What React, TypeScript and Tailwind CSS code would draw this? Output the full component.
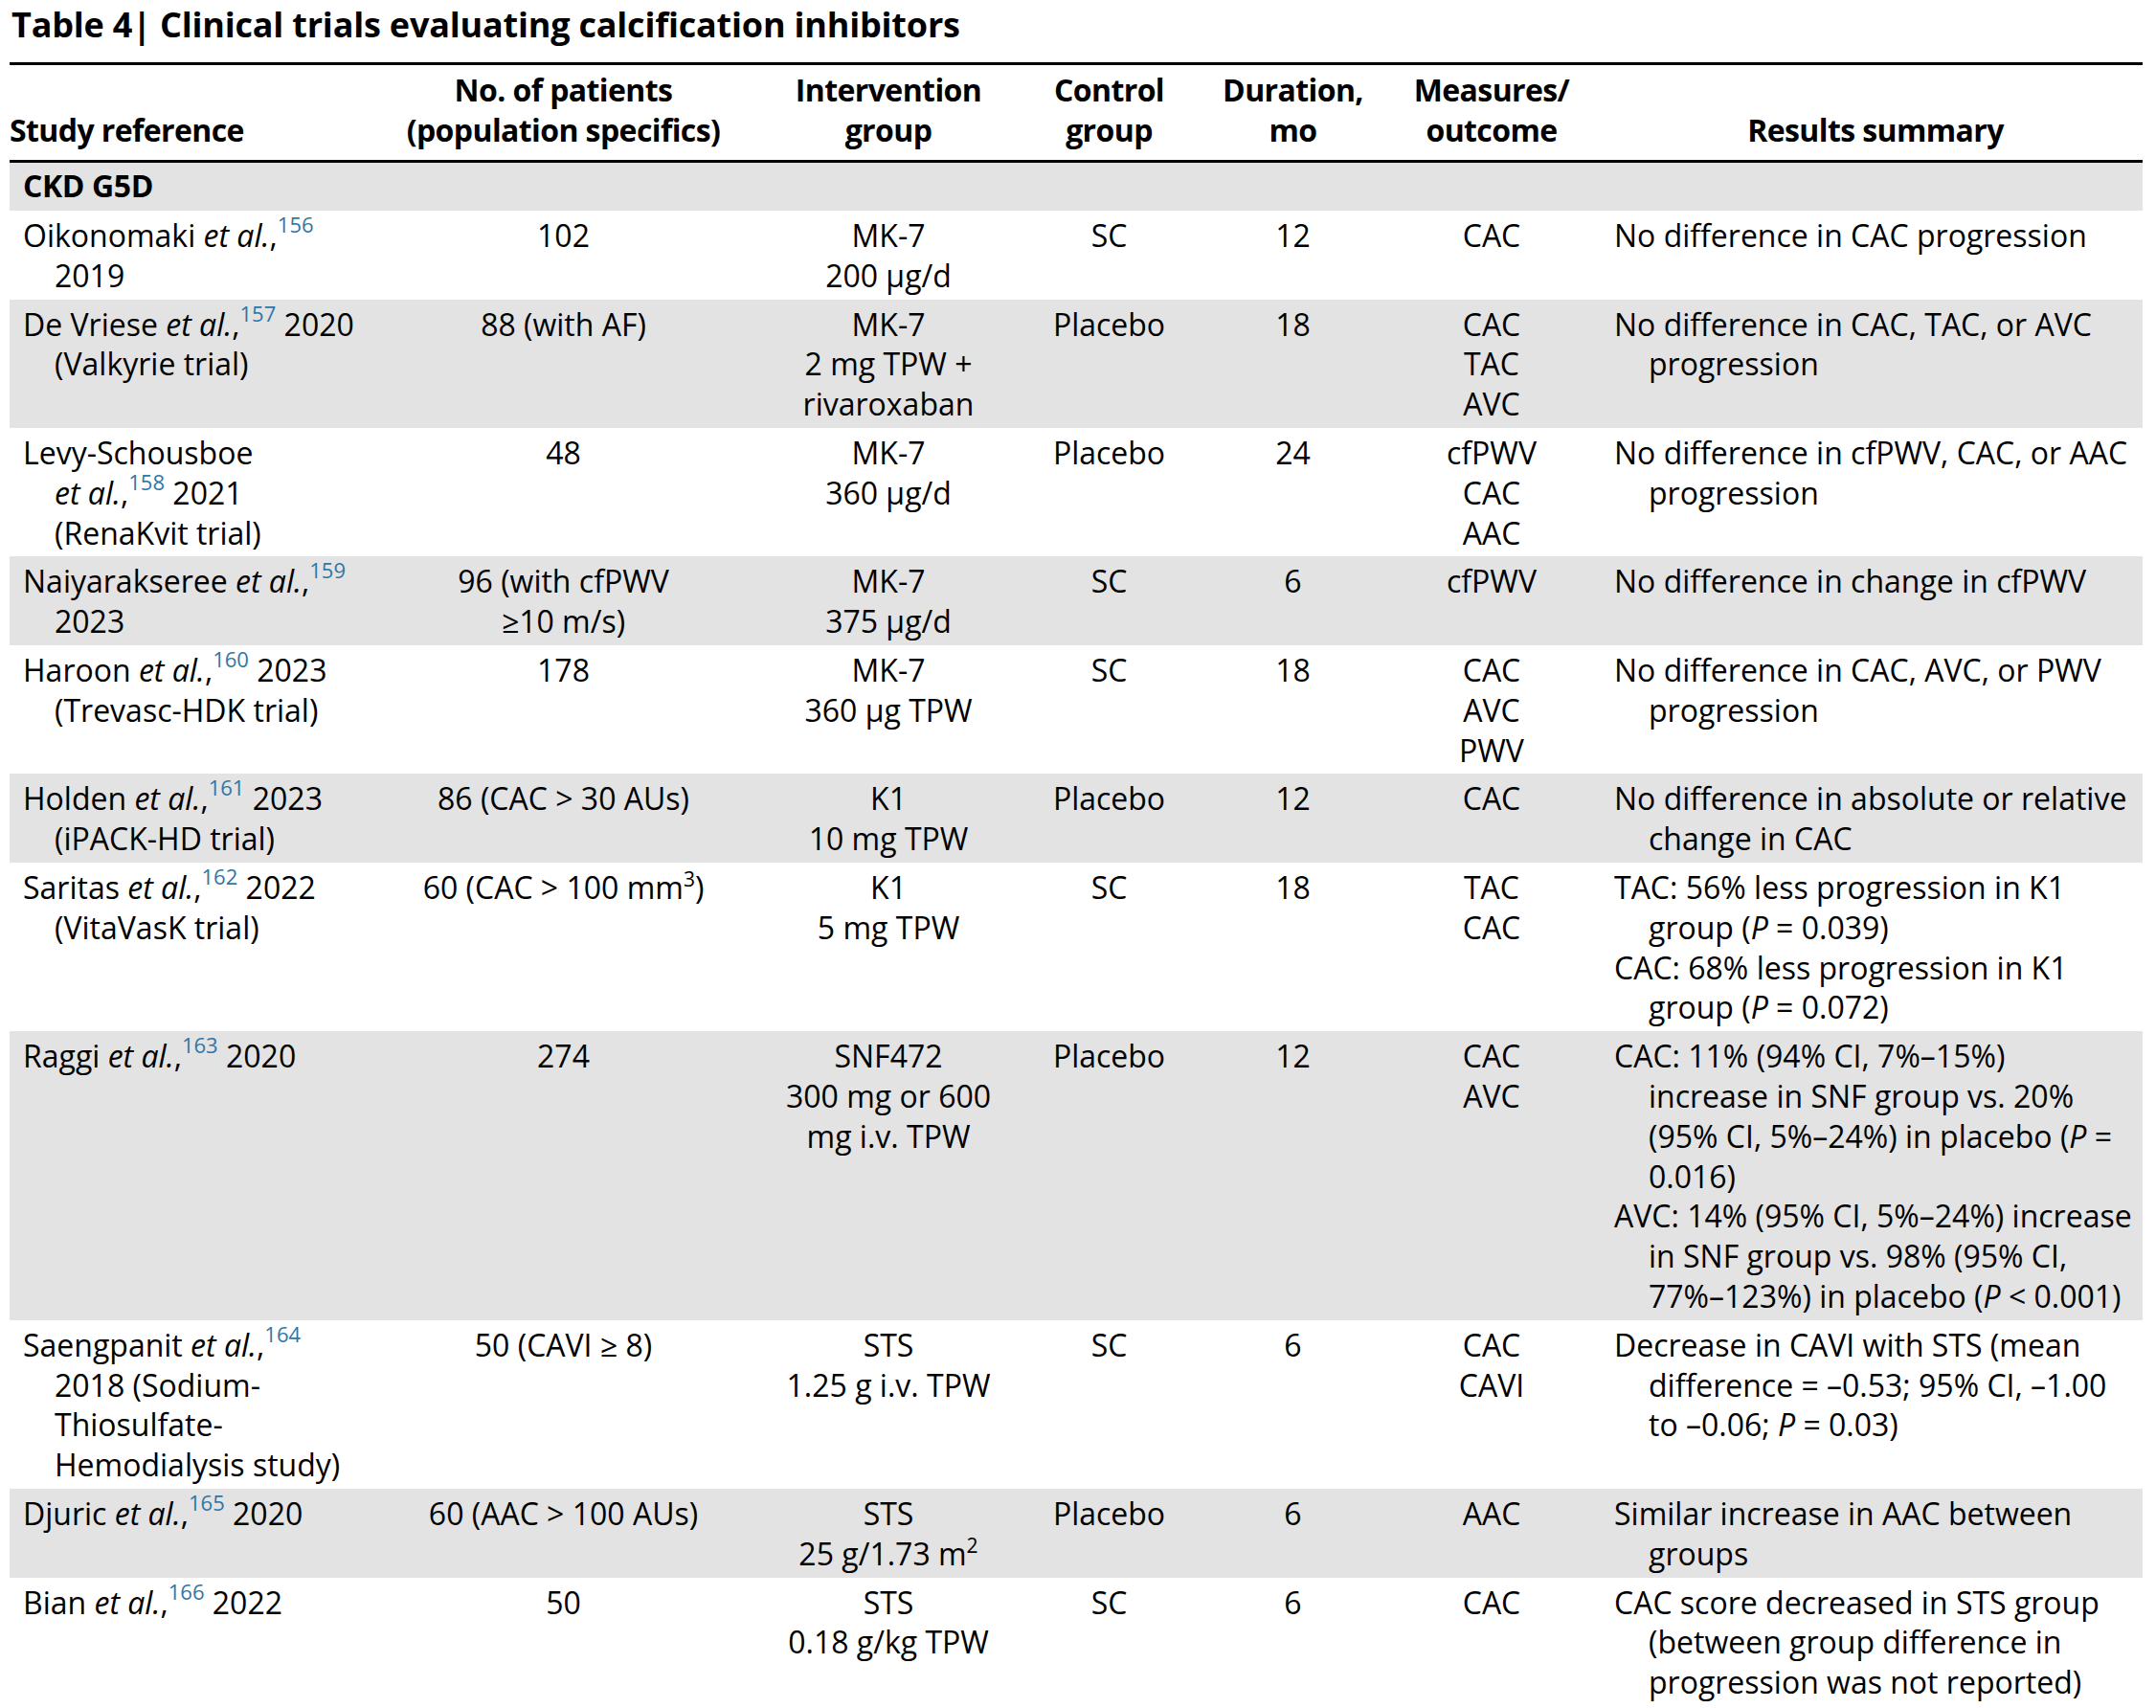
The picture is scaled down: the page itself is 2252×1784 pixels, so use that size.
import React from "react";

type N = React.ReactNode;

const It = ({ children }: { children: N }) => <i className="italic">{children}</i>;
const Sup = ({ n }: { n: string }) => (
  <span className="relative -top-[15px] text-[22px] leading-none text-[#2f77a6]">{n}</span>
);
const Pw = ({ n }: { n: string }) => (
  <span className="relative -top-[13px] text-[21px] leading-none">{n}</span>
);
const EtAl = ({ n }: { n: string }) => (
  <>
    <It>et al.</It>,<Sup n={n} />
  </>
);

type Row = {
  gray: boolean;
  c1: N[];
  c2: N[];
  c3: N[];
  c4: string;
  c5: string;
  c6: string[];
  c7: N[][];
};

const rows: Row[] = [
  {
    gray: false,
    c1: [<>Oikonomaki <EtAl n="156" /></>, "2019"],
    c2: ["102"],
    c3: ["MK-7", "200 µg/d"],
    c4: "SC",
    c5: "12",
    c6: ["CAC"],
    c7: [["No difference in CAC progression"]],
  },
  {
    gray: true,
    c1: [<>De Vriese <EtAl n="157" /> 2020</>, "(Valkyrie trial)"],
    c2: ["88 (with AF)"],
    c3: ["MK-7", "2 mg TPW +", "rivaroxaban"],
    c4: "Placebo",
    c5: "18",
    c6: ["CAC", "TAC", "AVC"],
    c7: [["No difference in CAC, TAC, or AVC", "progression"]],
  },
  {
    gray: false,
    c1: ["Levy-Schousboe", <><EtAl n="158" /> 2021</>, "(RenaKvit trial)"],
    c2: ["48"],
    c3: ["MK-7", "360 µg/d"],
    c4: "Placebo",
    c5: "24",
    c6: ["cfPWV", "CAC", "AAC"],
    c7: [["No difference in cfPWV, CAC, or AAC", "progression"]],
  },
  {
    gray: true,
    c1: [<>Naiyarakseree <EtAl n="159" /></>, "2023"],
    c2: ["96 (with cfPWV", "≥10 m/s)"],
    c3: ["MK-7", "375 µg/d"],
    c4: "SC",
    c5: "6",
    c6: ["cfPWV"],
    c7: [["No difference in change in cfPWV"]],
  },
  {
    gray: false,
    c1: [<>Haroon <EtAl n="160" /> 2023</>, "(Trevasc-HDK trial)"],
    c2: ["178"],
    c3: ["MK-7", "360 µg TPW"],
    c4: "SC",
    c5: "18",
    c6: ["CAC", "AVC", "PWV"],
    c7: [["No difference in CAC, AVC, or PWV", "progression"]],
  },
  {
    gray: true,
    c1: [<>Holden <EtAl n="161" /> 2023</>, "(iPACK-HD trial)"],
    c2: ["86 (CAC > 30 AUs)"],
    c3: ["K1", "10 mg TPW"],
    c4: "Placebo",
    c5: "12",
    c6: ["CAC"],
    c7: [["No difference in absolute or relative", "change in CAC"]],
  },
  {
    gray: false,
    c1: [<>Saritas <EtAl n="162" /> 2022</>, "(VitaVasK trial)"],
    c2: [<>60 (CAC &gt; 100 mm<Pw n="3" />)</>],
    c3: ["K1", "5 mg TPW"],
    c4: "SC",
    c5: "18",
    c6: ["TAC", "CAC"],
    c7: [
      ["TAC: 56% less progression in K1", <>group (<It>P</It> = 0.039)</>],
      ["CAC: 68% less progression in K1", <>group (<It>P</It> = 0.072)</>],
    ],
  },
  {
    gray: true,
    c1: [<>Raggi <EtAl n="163" /> 2020</>],
    c2: ["274"],
    c3: ["SNF472", "300 mg or 600", "mg i.v. TPW"],
    c4: "Placebo",
    c5: "12",
    c6: ["CAC", "AVC"],
    c7: [
      [
        "CAC: 11% (94% CI, 7%–15%)",
        "increase in SNF group vs. 20%",
        <>(95% CI, 5%–24%) in placebo (<It>P</It> =</>,
        "0.016)",
      ],
      [
        "AVC: 14% (95% CI, 5%–24%) increase",
        "in SNF group vs. 98% (95% CI,",
        <>77%–123%) in placebo (<It>P</It> &lt; 0.001)</>,
      ],
    ],
  },
  {
    gray: false,
    c1: [<>Saengpanit <EtAl n="164" /></>, "2018 (Sodium-", "Thiosulfate-", "Hemodialysis study)"],
    c2: ["50 (CAVI ≥ 8)"],
    c3: ["STS", "1.25 g i.v. TPW"],
    c4: "SC",
    c5: "6",
    c6: ["CAC", "CAVI"],
    c7: [
      [
        "Decrease in CAVI with STS (mean",
        "difference = –0.53; 95% CI, –1.00",
        <>to –0.06; <It>P</It> = 0.03)</>,
      ],
    ],
  },
  {
    gray: true,
    c1: [<>Djuric <EtAl n="165" /> 2020</>],
    c2: ["60 (AAC > 100 AUs)"],
    c3: ["STS", <>25 g/1.73 m<Pw n="2" /></>],
    c4: "Placebo",
    c5: "6",
    c6: ["AAC"],
    c7: [["Similar increase in AAC between", "groups"]],
  },
  {
    gray: false,
    c1: [<>Bian <EtAl n="166" /> 2022</>],
    c2: ["50"],
    c3: ["STS", "0.18 g/kg TPW"],
    c4: "SC",
    c5: "6",
    c6: ["CAC"],
    c7: [
      [
        "CAC score decreased in STS group",
        "(between group difference in",
        "progression was not reported)",
      ],
    ],
  },
];

const GRID = "grid grid-cols-[381px_395px_284px_177px_207px_208px_576px]";

function Centered({ lines }: { lines: N[] }) {
  return (
    <div className="text-center">
      {lines.map((l, i) => (
        <div key={i} className="whitespace-nowrap">
          {l}
        </div>
      ))}
    </div>
  );
}

function BodyRow({ r }: { r: Row }) {
  return (
    <div className={`${GRID} pt-[5px] pb-[4px] ${r.gray ? "bg-[#e3e3e3]" : "bg-white"}`}>
      <div className="pl-[14px]">
        {r.c1.map((l, i) => (
          <div key={i} className={`whitespace-nowrap ${i > 0 ? "pl-[33px]" : ""}`}>
            {l}
          </div>
        ))}
      </div>
      <Centered lines={r.c2} />
      <Centered lines={r.c3} />
      <Centered lines={[r.c4]} />
      <Centered lines={[r.c5]} />
      <Centered lines={r.c6} />
      <div className="pl-[24px]">
        {r.c7.map((p, pi) => (
          <div key={pi}>
            {p.map((l, i) => (
              <div key={i} className={`whitespace-nowrap ${i > 0 ? "pl-[36px]" : ""}`}>
                {l}
              </div>
            ))}
          </div>
        ))}
      </div>
    </div>
  );
}

export default function App() {
  return (
    <div className="w-[2252px] min-h-[1784px] bg-white text-black font-['Open_Sans',sans-serif] text-[32px] leading-[41.8px]">
      <div className="h-[65px] pl-[12px] pt-[2px] text-[36px] font-bold leading-[48px] tracking-[-0.2px] whitespace-nowrap">
        Table 4| Clinical trials evaluating calcification inhibitors
      </div>
      <div className="ml-[10px] w-[2228px]">
        <div className="h-[3px] bg-black" />
        <div className={`${GRID} h-[99px] items-end pb-[10px] font-bold tracking-[-0.6px]`}>
          <div className="whitespace-nowrap">Study reference</div>
          <Centered lines={["No. of patients", "(population specifics)"]} />
          <Centered lines={["Intervention", "group"]} />
          <Centered lines={["Control", "group"]} />
          <Centered lines={["Duration,", "mo"]} />
          <Centered lines={["Measures/", "outcome"]} />
          <div className="pl-[18px] text-center whitespace-nowrap">Results summary</div>
        </div>
        <div className="h-[3px] bg-black" />
        <div className="h-[50px] bg-[#e3e3e3] pl-[14px] pt-[3px] font-bold tracking-[-0.4px]">CKD G5D</div>
        {rows.map((r, i) => (
          <BodyRow key={i} r={r} />
        ))}
      </div>
    </div>
  );
}
